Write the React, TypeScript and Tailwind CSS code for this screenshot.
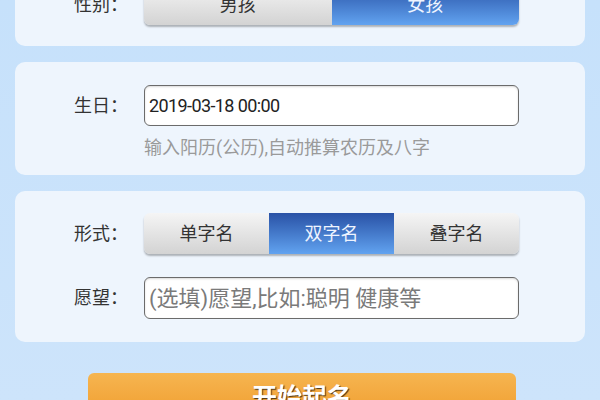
import React from "react";

const font = { fontFamily: 'Roboto, "Noto Sans CJK SC", "Noto Sans", sans-serif' };

function Seg({ items, active }: { items: string[]; active: number }) {
  return (
    <div className="flex w-[375px] h-[41px] rounded-[6px] overflow-hidden shadow-[0_2px_2px_rgba(0,0,0,0.28)]">
      {items.map((t, i) =>
        i === active ? (
          <div
            key={t}
            className="flex-1 flex items-center justify-center text-[18px] text-[#eef4ff] bg-gradient-to-b from-[#2a52a6] to-[#62a3f0]"
          >
            {t}
          </div>
        ) : (
          <div
            key={t}
            className="flex-1 flex items-center justify-center text-[18px] text-[#333] bg-gradient-to-b from-[#f5f5f5] to-[#d3d3d3]"
          >
            {t}
          </div>
        )
      )}
    </div>
  );
}

function Label({ children }: { children: React.ReactNode }) {
  return <div className="w-[70px] text-[18px] text-[#333] leading-none">{children}</div>;
}

export default function App() {
  return (
    <div
      className="w-[600px] h-[400px] overflow-hidden bg-gradient-to-b from-[#c6e1fb] to-[#cde4fb]"
      style={font}
    >
      <div className="flex flex-col gap-[16px] px-[15px] mt-[-37px]">
        <div className="rounded-[10px] bg-[#eef5fd] pt-[21px] pb-[21px] pl-[59px]">
          <div className="flex items-center">
            <Label>性别：</Label>
            <Seg items={["男孩", "女孩"]} active={1} />
          </div>
        </div>

        <div className="rounded-[10px] bg-[#eef5fd] pt-[23px] pb-[15px] pl-[59px]">
          <div className="flex items-center">
            <Label>生日：</Label>
            <div className="w-[375px] h-[41px] rounded-[6px] border-[1.5px] border-[#6b6b6b] bg-white shadow-[inset_0_1px_2px_rgba(0,0,0,0.15)] flex items-center pl-[4px] text-[18px] tracking-[-0.6px] text-[#222]">
              2019-03-18 00:00
            </div>
          </div>
          <div className="ml-[70px] mt-[10px] text-[18px] leading-[24px] text-[#9a9a9a]">
            输入阳历(公历),自动推算农历及八字
          </div>
        </div>

        <div className="rounded-[10px] bg-[#eef5fd] pt-[22px] pb-[23px] pl-[59px]">
          <div className="flex items-center">
            <Label>形式：</Label>
            <Seg items={["单字名", "双字名", "叠字名"]} active={1} />
          </div>
          <div className="flex items-center mt-[23px]">
            <Label>愿望：</Label>
            <div className="w-[375px] h-[42px] rounded-[6px] border-[1.5px] border-[#6b6b6b] bg-white shadow-[inset_0_1px_2px_rgba(0,0,0,0.15)] flex items-center pl-[4px] text-[22px] text-[#7a7a7a]">
              (选填)愿望,比如:聪明 健康等
            </div>
          </div>
        </div>

        <div className="ml-[73px] mt-[15px] w-[428px] h-[50px] rounded-[6px] bg-gradient-to-b from-[#f6b550] to-[#ef9a26] flex items-center justify-center text-[25px] font-bold text-white [text-shadow:1px_1px_1px_rgba(0,0,0,0.7)]">
          开始起名
        </div>
      </div>
    </div>
  );
}
